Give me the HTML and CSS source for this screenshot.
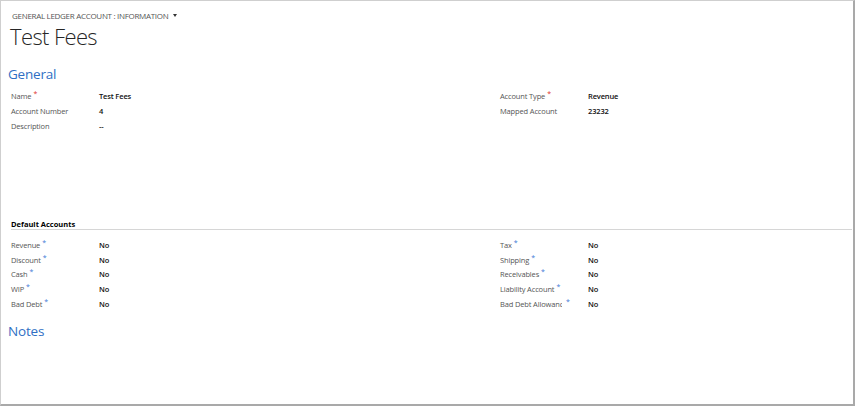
FILE: index.html
```html
<!DOCTYPE html>
<html lang="en">
<head>
    <meta charset="UTF-8">
    <meta name="viewport" content="width=device-width, initial-scale=1.0">
    <title>Test Fees - General Ledger Account</title>
    <link rel="stylesheet" href="styles.css">
</head>
<body>
    <div class="frame">
        <div class="breadcrumb">General Ledger Account : Information <span class="caret"></span></div>
        <h1 class="title">Test Fees</h1>

        <h2 class="section-title">General</h2>
        <div class="two-col">
            <div class="field-list">
                <div class="field"><span class="label">Name<sup class="req">*</sup></span><span class="value">Test Fees</span></div>
                <div class="field"><span class="label">Account Number</span><span class="value">4</span></div>
                <div class="field"><span class="label">Description</span><span class="value">--</span></div>
            </div>
            <div class="field-list">
                <div class="field"><span class="label">Account Type<sup class="req">*</sup></span><span class="value">Revenue</span></div>
                <div class="field"><span class="label">Mapped Account</span><span class="value">23232</span></div>
            </div>
        </div>

        <h3 class="sub-title">Default Accounts</h3>
        <div class="two-col defaults">
            <div class="field-list">
                <div class="field"><span class="label">Revenue<sup class="rec">*</sup></span><span class="value">No</span></div>
                <div class="field"><span class="label">Discount<sup class="rec">*</sup></span><span class="value">No</span></div>
                <div class="field"><span class="label">Cash<sup class="rec">*</sup></span><span class="value">No</span></div>
                <div class="field"><span class="label">WIP<sup class="rec">*</sup></span><span class="value">No</span></div>
                <div class="field"><span class="label">Bad Debt<sup class="rec">*</sup></span><span class="value">No</span></div>
            </div>
            <div class="field-list">
                <div class="field"><span class="label">Tax<sup class="rec">*</sup></span><span class="value">No</span></div>
                <div class="field"><span class="label">Shipping<sup class="rec">*</sup></span><span class="value">No</span></div>
                <div class="field"><span class="label">Receivables<sup class="rec">*</sup></span><span class="value">No</span></div>
                <div class="field"><span class="label">Liability Account<sup class="rec">*</sup></span><span class="value">No</span></div>
                <div class="field"><span class="label"><span class="clip">Bad Debt Allowance</span><sup class="rec gap">*</sup></span><span class="value">No</span></div>
            </div>
        </div>

        <h2 class="section-title notes">Notes</h2>
    </div>
</body>
</html>
```

FILE: styles.css
```css
html, body {
    margin: 0;
    padding: 0;
    background-color: #fff;
}
body {
    font-family: "Open Sans", "Noto Sans", sans-serif;
    color: #333;
}
.frame {
    width: 855px;
    height: 406px;
    box-sizing: border-box;
    border-top: 1px solid #cfcfcf;
    border-left: 1px solid #cfcfcf;
    border-right: 2px solid #a9a9a9;
    border-bottom: 2px solid #a9a9a9;
    padding-top: 9px;
    overflow: hidden;
}
.breadcrumb {
    margin-left: 11px;
    font-size: 8px;
    line-height: 12px;
    text-transform: uppercase;
    color: #555;
    letter-spacing: -0.3px;
}
.caret {
    display: inline-block;
    width: 0;
    height: 0;
    margin-left: 3px;
    vertical-align: 2px;
    border-left: 2.5px solid transparent;
    border-right: 2.5px solid transparent;
    border-top: 3px solid #333;
}
.title {
    margin: 0 0 0 9px;
    font-size: 22px;
    font-weight: 300;
    line-height: 28px;
    color: #262626;
    letter-spacing: -0.6px;
}
.section-title {
    margin: 15px 0 0 7px;
    font-size: 13.5px;
    font-weight: 400;
    line-height: 18px;
    color: #2f6fc4;
    letter-spacing: -0.2px;
}
.section-title.notes {
    margin-top: 11px;
}
.two-col {
    display: grid;
    grid-template-columns: 489px 1fr;
    margin: 5px 0 0 10px;
}
.field {
    display: grid;
    grid-template-columns: 88px 1fr;
    height: 15px;
    align-items: center;
    font-size: 7.5px;
    letter-spacing: -0.15px;
}
.defaults {
    margin-top: 7.5px;
}
.defaults .field {
    height: 14.75px;
}
.label {
    color: #555;
    white-space: nowrap;
}
.clip {
    display: inline-block;
    max-width: 62px;
    overflow: hidden;
    vertical-align: bottom;
}
.value {
    color: #111;
    font-weight: 600;
}
sup {
    font-size: 7px;
    line-height: 0;
    margin-left: 2px;
    vertical-align: 3px;
}
sup.gap {
    margin-left: 4px;
}
.req {
    color: #e0302c;
}
.rec {
    color: #3b78d6;
}
.sub-title {
    margin: 86px 0 0 10px;
    font-size: 7.5px;
    font-weight: 700;
    line-height: 10px;
    color: #000;
    border-bottom: 1px solid #d6d6d6;
    width: 841px;
}
```
